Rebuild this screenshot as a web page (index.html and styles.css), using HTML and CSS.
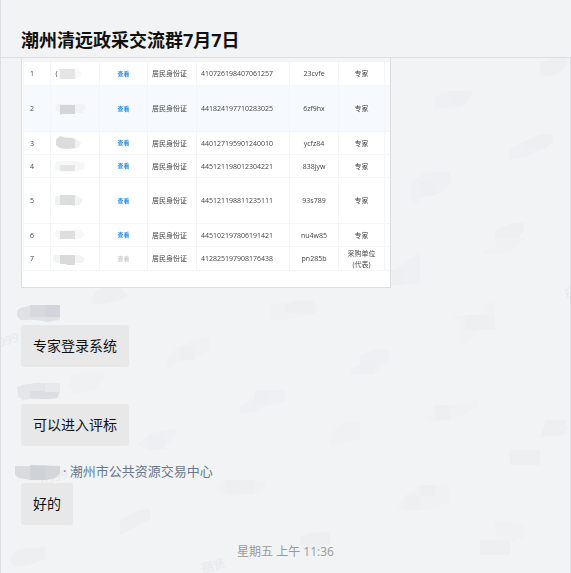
FILE: index.html
```
<!DOCTYPE html>
<html lang="zh-CN">
<head>
  <meta charset="UTF-8">
  <title>潮州清远政采交流群7月7日</title>
  <link rel="stylesheet" href="styles.css">
</head>
<body>
  <header class="chat-header">
    <h1>潮州清远政采交流群7月7日</h1>
  </header>

  <main class="chat">
    <svg class="watermark" aria-hidden="true">
      <g fill="#eeeff1">
        <path d="M540 4l12-3 14-1 2 4-5 8-10 6-13-1z"/>
        <path d="M435 40l6-5 9-2h23l-4 9-8 7-10 2-16-1z" opacity=".6"/>
        <path d="M450 33h15v14h-15z"/>
        <path d="M510 91l15-8 16-7 12 1v6l-9 8-17 7-17 4z" opacity=".6"/>
        <path d="M525 83l16-7 12 1v6l-9 8h-19z"/>
        <path d="M411 137v-13l9-6v-2l12-2h18v13l-10 8-20 5v5l-7 1z" opacity=".6"/>
        <path d="M420 123h15v15h-15z"/>
        <path d="M481 196l15-8 2-8 12-4 15 4-15 14-16 1z" opacity=".5"/>
        <path d="M495 172l16-7 13 0-1 8-5 7-23 0z"/>
        <path d="M390 217l11-10 19-13v32h-30z" opacity=".6"/>
        <path d="M390 212h15v15h-15z"/>
        <path d="M451 258h30l3-11 6-4h5v27h-15l-14 16h-6v-23z" opacity=".5"/>
        <path d="M465 257h30v15h-30z"/>
        <path d="M540 379l6-17h20l2 9-5 6-23 2z"/>
        <path d="M92 247l3-13 12-8 12 1 4 6 6 4-10 6-14 3z"/>
        <path d="M167 302l8-11 24-11 11 0v12l-18 10-13 2-12 8z" opacity=".7"/>
        <path d="M180 288h15v14h-15z"/>
        <path d="M67 327l5-9 12-5 18 1 3 6-10 11-19 5z" opacity=".7"/>
        <path d="M270 246l15-1 12-3h18v13l-28 7-17-1z" opacity=".5"/>
        <path d="M285 247l12-4h18v12h-30z"/>
        <path d="M350 311l10-4v-9l15-7 14 1 1 11-14 10-12 4h-12z" opacity=".6"/>
        <path d="M360 303h15v13h-15z"/>
        <path d="M240 350l16-12v-6h29v11l-20 5-9 6-15 1z" opacity=".6"/>
        <path d="M255 333h15v14h-15z"/>
        <path d="M138 387l12-12 25-4 3 3-12 14-15 5z" opacity=".6"/>
        <path d="M150 377h15v14h-15z"/>
        <path d="M425 360l10-5 16-7 15-2 12-4-2 7-18 10-23 5z" opacity=".5"/>
        <path d="M435 347h15v15h-15z"/>
        <path d="M510 392h30v15h-30z"/>
        <path d="M216 428l12-5h39v6l-12 6-30 4z" opacity=".5"/>
        <path d="M225 422h30v14h-30z"/>
        <path d="M330 382l5-11 12-8h13v17l-17 6-13 3z" opacity=".7"/>
        <path d="M396 451l5-10 18-12 29-3 2 17-15 8-22 1z" opacity=".5"/>
        <path d="M405 437h15v15h-15zM420 427h15v11h-15z"/>
        <path d="M495 470v-7h15l15 6-1 10-14 5-12 0z" opacity=".5"/>
        <path d="M480 482h30v15h-30z"/>
        <path d="M120 463l14-9 16-4v11l-18 10-12 6z"/>
        <path d="M10 502l5-9 12-3 18-1v12l-16 6-15 2z"/>
        <path d="M300 479l11-4 19-1v13l-18 4-11-1z"/>
      </g>
      <g class="watermark-text">
        <text transform="translate(0 289) rotate(-18)">999</text>
        <text transform="translate(42 427) rotate(-15)">0999</text>
        <text transform="translate(203 515) rotate(-15)">丽贤</text>
        <text transform="translate(566 240) rotate(-18)">白</text>
      </g>
    </svg>

    <div class="picture">
      <table class="expert-table">
        <colgroup>
          <col class="col-no"><col class="col-name"><col class="col-view"><col class="col-type">
          <col class="col-id"><col class="col-code"><col class="col-role"><col>
        </colgroup>
        <tbody>
          <tr>
            <td>1</td>
            <td><svg class="smudge" viewBox="0 0 36 16"><path d="M5 3h18q6 2 5 5t-6 5H6z" fill="#f7f8f8"/><path d="M7 3h15v10H7z" fill="#e5e5e6"/><path d="M4 5q-2 3 0 6" fill="none" stroke="#888"/></svg></td>
            <td><a href="#">查看</a></td>
            <td class="left">居民身份证</td>
            <td class="left">410726198407061257</td>
            <td>23cvfe</td>
            <td>专家</td>
            <td></td>
          </tr>
          <tr class="tall active">
            <td>2</td>
            <td><svg class="smudge" viewBox="0 0 36 16"><path d="M5 3h26l2 4-4 5H7l-5-4z" fill="#f0f2f3"/><path d="M7 4h15v9H9l-2 1z" fill="#d4d7d9"/></svg></td>
            <td><a href="#">查看</a></td>
            <td class="left">居民身份证</td>
            <td class="left">441824197710283025</td>
            <td>6zf9hx</td>
            <td>专家</td>
            <td></td>
          </tr>
          <tr>
            <td>3</td>
            <td><svg class="smudge" viewBox="0 0 36 16"><path d="M3 4l5-3 14 2 6 5-3 5-16 1-6-3z" fill="#f1f1f1"/><path d="M7 1l5 2h7l3 2v8l-8 1-7-1-4-3V5z" fill="#dcdcdc"/></svg></td>
            <td><a href="#">查看</a></td>
            <td class="left">居民身份证</td>
            <td class="left">440127195901240010</td>
            <td>ycfz84</td>
            <td>专家</td>
            <td></td>
          </tr>
          <tr>
            <td>4</td>
            <td><svg class="smudge" viewBox="0 0 36 16"><path d="M3 3h18l11 2-1 6-11 3-17-1-2-5z" fill="#f6f7f7"/><path d="M7 7h15v6H7z" fill="#e5e5e5"/></svg></td>
            <td><a href="#">查看</a></td>
            <td class="left">居民身份证</td>
            <td class="left">445121198012304221</td>
            <td>838jyw</td>
            <td>专家</td>
            <td></td>
          </tr>
          <tr class="tall">
            <td>5</td>
            <td><svg class="smudge" viewBox="0 0 36 16"><path d="M3 3l19-1 8 4-3 6H2V5z" fill="#f1f2f2"/><path d="M7 2h15v11l-5-1H7z" fill="#dcdedd"/></svg></td>
            <td><a href="#">查看</a></td>
            <td class="left">居民身份证</td>
            <td class="left">445121198811235111</td>
            <td>93s789</td>
            <td>专家</td>
            <td></td>
          </tr>
          <tr>
            <td>6</td>
            <td><svg class="smudge" viewBox="0 0 36 16"><path d="M3 3h24l4 4-3 5H5L2 8z" fill="#f6f7f7"/><path d="M7 4h15v8H7z" fill="#dedede"/></svg></td>
            <td><a href="#">查看</a></td>
            <td class="left">居民身份证</td>
            <td class="left">445102197806191421</td>
            <td>nu4w85</td>
            <td>专家</td>
            <td></td>
          </tr>
          <tr>
            <td>7</td>
            <td><svg class="smudge" viewBox="0 0 36 16"><path d="M1 4h25l6 3-3 5H2L0 8z" fill="#f3f4f4"/><path d="M7 4h15v10h-8l-1-1H7z" fill="#dadada"/></svg></td>
            <td><a class="disabled" href="#">查看</a></td>
            <td class="left">居民身份证</td>
            <td class="left">412825197908176438</td>
            <td>pn285b</td>
            <td>采购单位<br>(代表)</td>
            <td></td>
          </tr>
        </tbody>
      </table>
    </div>

    <section class="message">
      <div class="sender">
        <svg class="sender-mask" viewBox="0 0 48 18">
          <path d="M2 7l3-3 10-2h30v12l-1 2-12 2-10-2H5l-3-4z" fill="#dfe1e4"/>
          <path d="M15 1h30v12H15z" fill="#d5d8dc"/>
          <path d="M30 1h15v12H30z" fill="#d2d5db"/>
        </svg>
      </div>
      <p class="bubble">专家登录系统</p>
    </section>

    <section class="message">
      <div class="sender">
        <svg class="sender-mask" viewBox="0 0 48 18">
          <path d="M2 4l5-2 14-2h24v9l-3 6-9 1H15l-8 1-4-4z" fill="#e3e5e9"/>
          <path d="M15 8h30l-3 7-10 1-17-1z" fill="#dcdee3"/>
          <path d="M30 0h15v9H30z" fill="#e7e9ed"/>
        </svg>
      </div>
      <p class="bubble">可以进入评标</p>
    </section>

    <section class="message">
      <div class="sender">
        <svg class="sender-mask" viewBox="0 0 48 18">
          <path d="M0 4h15v14L4 16l-4-3z" fill="#d9dcdf"/>
          <path d="M15 3l30 1v7l-5 5-9 2H15z" fill="#cfd3d8"/>
          <path d="M30 4h15v7l-5 5-10 1z" fill="#d3d6da"/>
        </svg>
        <span>· 潮州市公共资源交易中心</span>
      </div>
      <p class="bubble">好的</p>
    </section>

    <time class="timestamp">星期五 上午 11:36</time>
  </main>
</body>
</html>
```

FILE: styles.css
```
:root {
  --bg-color: #f1f3f5;
  --bubble-color: #e8e8e8;
  --border-color: #dcdee1;
  --cell-border: #f3f5f7;
}

* {
  box-sizing: border-box;
}

body {
  display: flex;
  flex-direction: column;
  min-height: 100vh;
  margin: 0;
  border-left: 1px solid var(--border-color);
  background: var(--bg-color);
  color: #111;
  font-family: "Open Sans", "Noto Sans CJK SC", sans-serif;
}

.chat-header {
  height: 58px;
  padding: 27px 20px 0;
  border-bottom: 1px solid var(--border-color);
}

.chat-header h1 {
  margin: 0;
  font-size: 18px;
  line-height: 26px;
}

.chat {
  position: relative;
  flex: 1;
  padding: 0 20px;
  border-right: 1px solid var(--border-color);
  overflow: hidden;
}

.watermark {
  position: absolute;
  top: 0;
  left: -1px;
  width: 100%;
  height: 100%;
}

.watermark-text {
  fill: #e6e8ea;
  font-size: 12px;
}

.picture {
  position: relative;
  width: 370px;
  padding: 4px 0 16px 1px;
  border: 1px solid var(--border-color);
  border-top: none;
  background: linear-gradient(#f5f5f6 4px, #fff 4px);
}

.expert-table {
  width: 100%;
  border-collapse: collapse;
  table-layout: fixed;
  color: #444;
  font-size: 7px;
  line-height: 11px;
  text-align: center;
}

.expert-table tr {
  height: 23px;
}

.expert-table .tall {
  height: 46px;
}

.expert-table .active {
  background: #f6fafe;
}

.expert-table td {
  padding: 1px 0 0;
  border: 1px solid var(--cell-border);
  border-top: none;
  filter: blur(0.4px);
}

.expert-table td:last-child {
  border-right: none;
}

.expert-table td:first-child {
  padding-right: 10px;
}

.expert-table .left {
  padding-left: 4px;
  text-align: left;
}

.expert-table a {
  color: #2a8de8;
  font-size: 6px;
  font-weight: bold;
  text-decoration: none;
}

.expert-table .disabled {
  color: #ccc;
}

.col-no { width: 27px; }
.col-name { width: 49px; }
.col-view { width: 48px; }
.col-type { width: 49px; }
.col-id { width: 93px; }
.col-code { width: 49px; }
.col-role { width: 46px; }

.smudge {
  display: block;
  width: 36px;
  height: 16px;
  margin-left: 2px;
}

.message {
  position: relative;
  padding-top: 16px;
}

.sender {
  display: flex;
  height: 18px;
  margin-bottom: 3px;
  color: #68788c;
  font-size: 13px;
  line-height: 18px;
}

.sender-mask {
  width: 48px;
  height: 18px;
  margin-left: -6px;
}

.bubble {
  width: fit-content;
  margin: 0;
  padding: 10px 12px;
  border-radius: 3px;
  background: var(--bubble-color);
  font-size: 14px;
  line-height: 22px;
}

.timestamp {
  position: relative;
  display: block;
  margin-top: 18px;
  color: #999;
  font-size: 12px;
  line-height: 18px;
  text-align: center;
}
```
